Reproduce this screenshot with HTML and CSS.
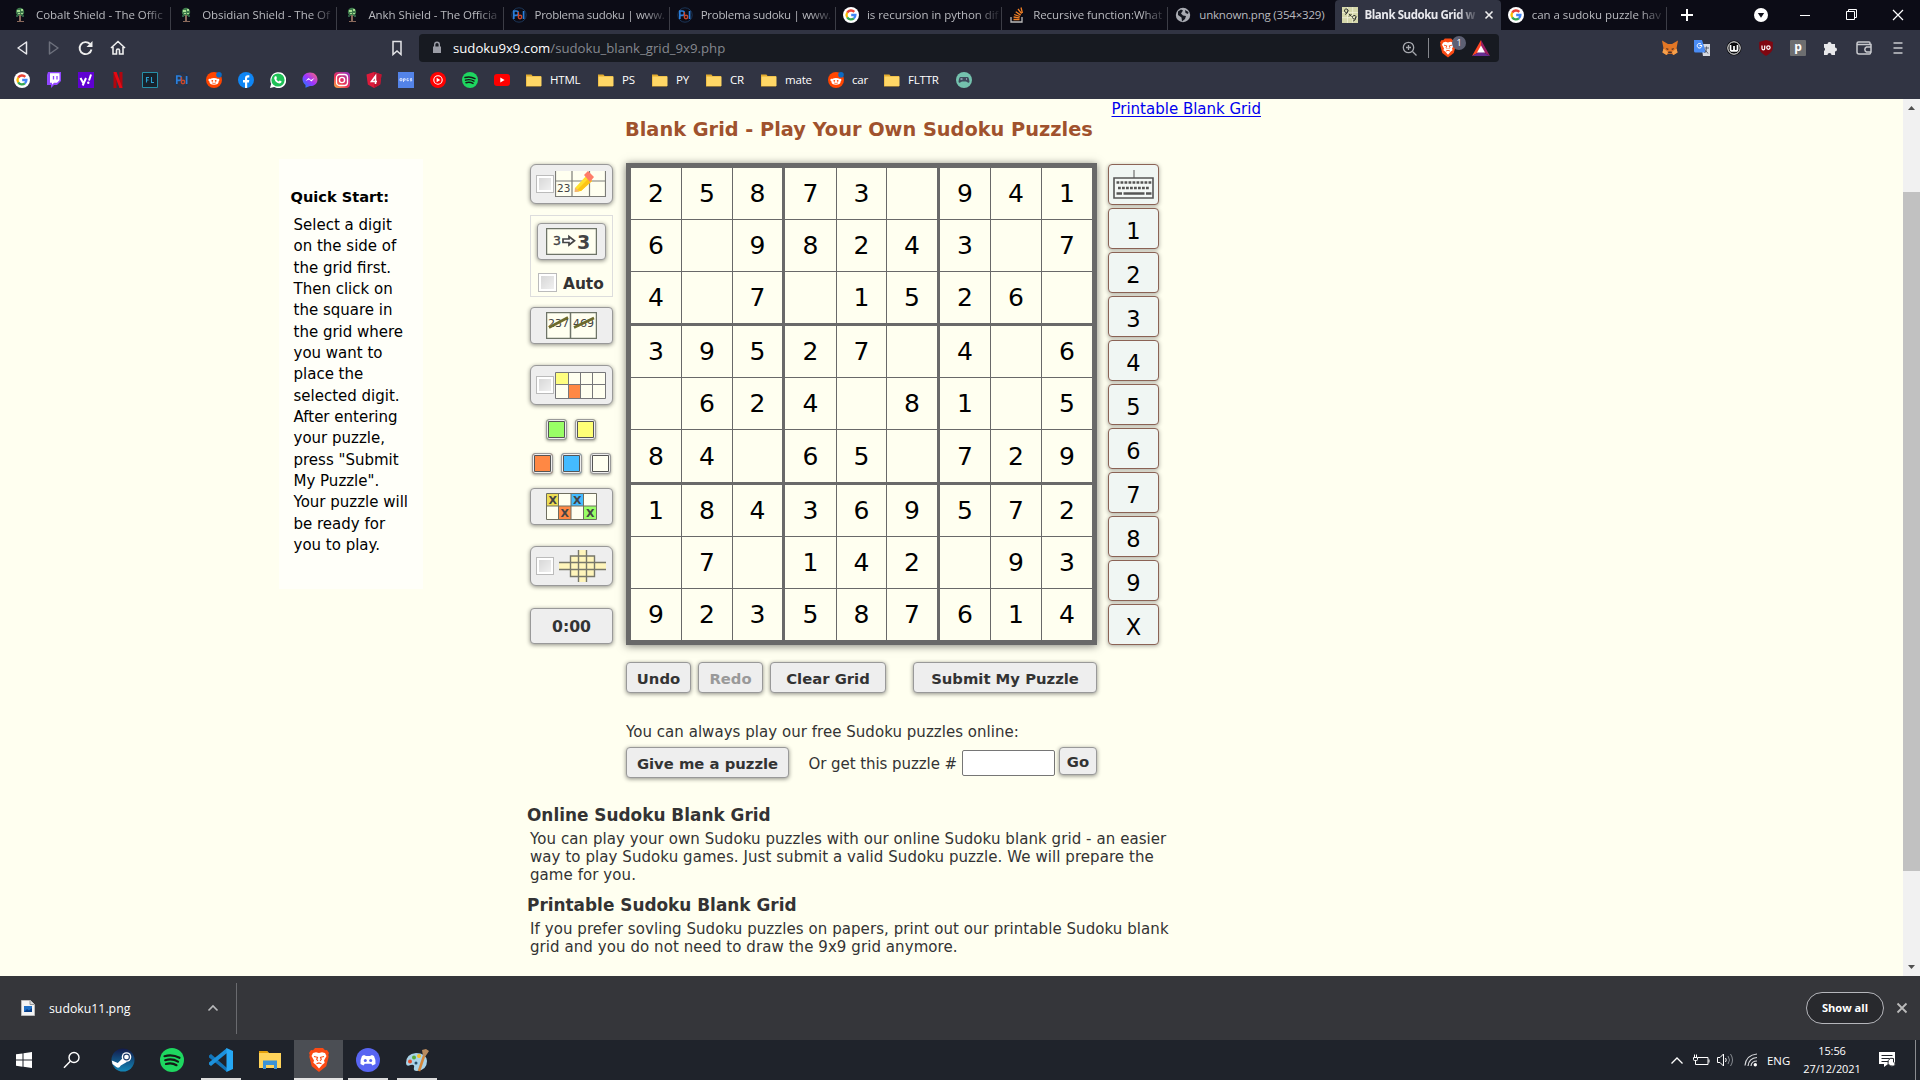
FILE: index.html
```html
<!DOCTYPE html>
<html lang="en">
<head>
<meta charset="utf-8">
<title>Blank Sudoku Grid</title>
<link rel="stylesheet" href="styles.css">
</head>
<body>
<svg class="defs" width="0" height="0">
  <symbol id="google" viewBox="0 0 16 16"><circle cx="8" cy="8" r="8" fill="#fff"/><g fill="none" stroke-width="2.3"><path d="M4.2 5.6A4.5 4.5 0 0 1 11.3 4.9" stroke="#ea4335"/><path d="M4.2 5.6a4.6 4.6 0 0 0 0 4.8" stroke="#fbbc05"/><path d="M4.2 10.4a4.5 4.5 0 0 0 6.7.9" stroke="#34a853"/><path d="M8.2 8h4.2a4.5 4.5 0 0 1-1.5 3.3" stroke="#4285f4"/></g></symbol>
  <symbol id="tree" viewBox="0 0 16 16"><circle cx="8" cy="5" r="4.2" fill="#3f7a4c"/><path d="M5 3h3v2H5zM9 2h2v2H9zM9 6h2v1H9zM6 6h2v1H6z" fill="#a6dd92"/><path d="M7 8h2v6H7zM5 14h7v1H5z" fill="#8a6a5c"/><path d="M4 8h2v2H4zM10 8h2v2h-2z" fill="#2d5c44"/></symbol>
  <symbol id="pbi" viewBox="0 0 16 16"><circle cx="8" cy="8" r="7.2" fill="none" stroke="#1b3556"/><path d="M2.8 12V4h2.4a2 2 0 0 1 0 4.3H3.6M12.6 4v8" fill="none" stroke="#2a7fdc" stroke-width="1.7"/><circle cx="9" cy="10" r="1.7" fill="none" stroke="#c9472c" stroke-width="1.4"/><path d="M7.4 5v5" stroke="#c9472c" stroke-width="1.2"/></symbol>
  <symbol id="reddit" viewBox="0 0 16 16"><circle cx="8" cy="8" r="8" fill="#ff4500"/><ellipse cx="8" cy="9.4" rx="4.6" ry="3.3" fill="#fff"/><circle cx="3.6" cy="8" r="1.2" fill="#fff"/><circle cx="12.2" cy="8" r="1.2" fill="#fff"/><circle cx="6.3" cy="8.8" r=".9" fill="#ff4500"/><circle cx="9.7" cy="8.8" r=".9" fill="#ff4500"/><path d="M6 10.9q2 1.2 4 0M8 6l.6-2.4" fill="none" stroke="#ff4500" stroke-width=".7"/><circle cx="13" cy="2.8" r="2.8" fill="#0b6bc4"/></symbol>
  <symbol id="folder" viewBox="0 0 16 16"><path d="M0 2.500h5.400L6.600 4H15v10.500H0z" fill="#e3ab2e"/><path d="M.5 4.500h15V14H.5z" fill="#ffd766"/></symbol>
  <symbol id="spotify" viewBox="0 0 24 24"><circle cx="12" cy="12" r="12" fill="#1ed760"/><path d="M4.500 8.200q8-2.200 15 1.600M5.200 12.200q7-2 12.800 1.400M6 16q6-1.500 10.500 1.200" fill="none" stroke="#141a16" stroke-width="2.200" stroke-linecap="round"/></symbol>
  <symbol id="brave" viewBox="0 0 20 24"><path d="M6 0h8l2 2.300 2-.3 2 3-.7 1.800.4 2-2.500 9.400L10 24l-7.200-5.800L.3 8.800l.4-2L0 5l2-3 2 .3z" fill="#fb4a14"/><path d="M4 5l3-.7 3 .8 3-.8 3 .7 1.500 3-2.500 4.500.7 2.200-2.200 1.800L10 20.500 6.500 16.500l-2.200-1.800.7-2.200L2.500 8z" fill="#fff"/><path d="M5 8.500l3.500.8-.8 2.200 1.300 1.500M15 8.500l-3.500.8.8 2.200L11 13M7.500 15.800l2.500-.9 2.500.9" fill="none" stroke="#fb4a14" stroke-width="1.100"/></symbol>
</svg>

<header class="browser">
  <div class="tabs">
    <div class="tab"><svg class="i16"><use href="#tree"/></svg><span>Cobalt Shield - The Offic</span></div>
    <div class="tab"><svg class="i16"><use href="#tree"/></svg><span>Obsidian Shield - The Of</span></div>
    <div class="tab"><svg class="i16"><use href="#tree"/></svg><span>Ankh Shield - The Officia</span></div>
    <div class="tab"><svg class="i16"><use href="#pbi"/></svg><span class="tight">Problema sudoku | www.</span></div>
    <div class="tab"><svg class="i16"><use href="#pbi"/></svg><span class="tight">Problema sudoku | www.</span></div>
    <div class="tab"><svg class="i16"><use href="#google"/></svg><span>is recursion in python dif</span></div>
    <div class="tab"><svg class="i16" viewBox="0 0 16 16"><path d="M2 10v5h11v-5" fill="none" stroke="#bcbbbb" stroke-width="1.300"/><path d="M4.500 12.500h6M4.600 10l6 .8M5.200 7.500l5.600 2M6.700 4.700l5 3.400M9 2l3.600 4.700M12 .5l1.400 5.500" stroke="#f48024" stroke-width="1.300"/></svg><span>Recursive function:What</span></div>
    <div class="tab plain"><svg class="i16" viewBox="0 0 16 16"><circle cx="8" cy="8" r="7.200" fill="#a9abb2"/><path d="M3 4.500l3-2 2 1-2 3 2 2 3 .5-1 3-3 2.500-.5-4L3 8zM10 3l3.500 2-.5 2-2.500-1z" fill="#14161f"/></svg><span>unknown.png (354×329)</span></div>
    <div class="tab active"><svg class="i16" viewBox="0 0 16 16"><path d="M0 0h16v16H0z" fill="#d6d8ac"/><path d="M5.500 0v16M10.700 0v16M0 5.500h16M0 10.700h16" stroke="#f4f4dc" stroke-width=".7"/><path d="M6 3.200a1.800 1.800 0 1 0-1.500 2.300Q6 5.200 6 3.200 5.700 7 3 7.500M14 9.700a1.800 1.800 0 1 0-1.500 2.300q1.500-.3 1.500-2.300-.2 4-3 4.500M7 7l2.500 2.500M9.500 7L7 9.500" fill="none" stroke="#363a34"/></svg><span>Blank Sudoku Grid w</span><svg class="tab-x" viewBox="0 0 10 10"><path d="M1.500 1.500l7 7m0-7l-7 7" stroke="#eee" stroke-width="1.600"/></svg></div>
    <div class="tab"><svg class="i16"><use href="#google"/></svg><span>can a sudoku puzzle hav</span></div>
    <div class="window">
      <svg width="14" height="14"><path d="M7 1v12M1 7h12" stroke="#fff" stroke-width="2"/></svg>
      <svg width="14" height="14"><circle cx="7" cy="7" r="7" fill="#fff"/><path d="M3.800 5h6.400L7 9.800z" fill="#10111c"/></svg>
      <svg width="11" height="12"><path d="M0 6.500h10" stroke="#fff"/></svg>
      <svg width="12" height="12"><path d="M.5 2.500h8v8h-8zM2.500 2V.5h8v8H9" fill="none" stroke="#fff"/></svg>
      <svg width="12" height="12"><path d="M1 1l10 10m0-10L1 11" stroke="#fff" stroke-width="1.200"/></svg>
    </div>
  </div>
  <div class="toolbar">
    <div class="nav">
      <svg class="i16" viewBox="0 0 16 16"><path d="M12.500 2v12L4 8z" fill="none" stroke="#e8e8ec" stroke-width="1.500" stroke-linejoin="round"/></svg>
      <svg class="i16" viewBox="0 0 16 16"><path d="M3.500 2v12L12 8z" fill="none" stroke="#6d707c" stroke-width="1.500" stroke-linejoin="round"/></svg>
      <svg class="i16" viewBox="0 0 16 16"><path d="M13.500 9.500A6 6 0 1 1 12 4" fill="none" stroke="#eee" stroke-width="1.900"/><path d="M14.500 1v6h-6z" fill="#eee"/></svg>
      <svg class="i16" viewBox="0 0 16 16"><path d="M1 8l7-6.500L15 8M3 7v7h3.500v-3.500a1.500 1.500 0 0 1 3 0V14H13V7" fill="none" stroke="#eee" stroke-width="1.600"/></svg>
    </div>
    <svg class="i16 bookmark" viewBox="0 0 16 16"><path d="M4 1.500h8v13L8 11l-4 3.500z" fill="none" stroke="#e4e4e8" stroke-width="1.500"/></svg>
    <div class="url">
      <svg width="10" height="14"><path d="M1 5.500h8V12H1z" fill="#9a9ca5"/><path d="M2.700 6V3.500a2.300 2.300 0 0 1 4.600 0V6" fill="none" stroke="#9a9ca5" stroke-width="1.400"/></svg>
      <span class="address"><b>sudoku9x9.com</b>/sudoku_blank_grid_9x9.php</span>
      <svg class="mag" width="15" height="15"><circle cx="6.500" cy="6.500" r="5.200" fill="none" stroke="#a6a8ae" stroke-width="1.300"/><path d="M10.500 10.500l4 4M4 6.500h5M6.500 4v5" stroke="#a6a8ae" stroke-width="1.300"/></svg>
      <i class="rule"></i>
      <span class="shield"><svg width="16" height="20"><use href="#brave"/></svg><em>1</em></span>
      <svg class="bat" width="18" height="16"><path d="M9 0L0 16l9-5z" fill="#ff4724"/><path d="M9 0l9 16-9-5z" fill="#9e1f63"/><path d="M0 16h18l-9-5z" fill="#662d91"/><path d="M9 5.500l4 7H5z" fill="#fff"/></svg>
    </div>
    <div class="extensions">
      <svg class="i16" viewBox="0 0 16 16"><path d="M0 .5l6 3.500h4l6-3.500-1.500 8 1 4-4 2.500-2-1.200h-3L4.500 15l-4-2.500 1-4z" fill="#e27625"/><path d="M4 8l3 1-2 1zM12 8L9 9l2 1zM6 13h4l-.5-1.500h-3z" fill="#4b2e24"/><path d="M1.500 8.500L6 12l-1.500 3-4-2.500zM14.500 8.500L10 12l1.500 3 4-2.500z" fill="#f5a04c"/></svg>
      <svg class="i16" viewBox="0 0 16 16"><path d="M7 4h9v12H9z" fill="#d5d8df"/><path d="M0 0h8l4 12.500H1.500A1.500 1.500 0 0 1 0 11z" fill="#4a8cf5"/><path d="M8 5.500H5.500M7.800 5.700a2.300 2.300 0 1 1-.7-1.600" fill="none" stroke="#fff"/><path d="M10.500 8h4.500M12.500 6.500V8q0 3-2 5M11 9.500l3 4" fill="none" stroke="#5c6270"/></svg>
      <svg class="i16" viewBox="0 0 16 16"><circle cx="8" cy="8" r="7.500" fill="#0b0b0d"/><circle cx="8" cy="8" r="6.200" fill="none" stroke="#fff"/><path d="M4.500 5v4.200a1.700 1.700 0 0 0 3.500 0V6v3.200a1.700 1.700 0 0 0 3.500 0V5" fill="none" stroke="#fff" stroke-width="1.700"/></svg>
      <svg class="i16" viewBox="0 0 16 16"><path d="M8 0l6.800 2v6q0 4-6.800 8Q1.200 12 1.200 8V2z" fill="#800610"/><path d="M4 5.500v3a1 1 0 0 0 2.700 0v-3" fill="none" stroke="#fff" stroke-width="1.200"/><circle cx="10.400" cy="7.600" r="1.700" fill="none" stroke="#fff" stroke-width="1.200"/></svg>
      <span class="pbadge">p</span>
      <svg class="i16" viewBox="0 0 16 16"><path d="M2 4h3.500a2 2 0 1 1 4 0H13v3.500a2 2 0 1 1 0 4V15H9.500a2 2 0 0 0-4 0H2v-4a2 2 0 0 0 0-3.500z" fill="#e7e7ea"/></svg>
      <svg class="i16 wide" viewBox="0 0 16 16"><path d="M14 4.500V3q0-1-1-1H2.500A1.500 1.500 0 0 0 1 3.500V12q0 2 2 2h10.500q1 0 1-1v-1.500M1.500 4.500H15v7.500h-4.500a2.700 2.700 0 0 1 0-5H15" fill="none" stroke="#c8c9ce" stroke-width="1.500"/></svg>
      <svg class="i16 wide" viewBox="0 0 16 16"><path d="M3.500 3h9M3.500 8h9M3.500 13h9" stroke="#c8c9ce" stroke-width="1.500"/></svg>
    </div>
  </div>
  <nav class="bookmarks">
    <svg class="i16"><use href="#google"/></svg>
    <svg class="i16" viewBox="0 0 16 16"><path d="M2 0h13v9l-4 4H8l-3 3v-3H1V3z" fill="#9146ff"/><path d="M4 1.200h9.500v7l-2.500 2.500H8L6 12.700v-2H4z" fill="#fff"/><path d="M7.500 4v3.500M11 4v3.500" stroke="#9146ff" stroke-width="1.300"/></svg>
    <svg class="i16" viewBox="0 0 16 16"><path d="M0 0h16v16H0z" fill="#6001d2"/><path d="M2.500 6l2.700 5M8 6l-3.300 7.500M13 2.500l-2 6" stroke="#fff" stroke-width="2"/><circle cx="10.300" cy="10.800" r="1.200" fill="#fff"/></svg>
    <svg class="i16" viewBox="0 0 16 16"><path d="M3.500 0h3v16h-3zM9.500 0h3v16h-3z" fill="#b1060f"/><path d="M3.500 0h3l6 16h-3z" fill="#e50914"/></svg>
    <svg class="i16" viewBox="0 0 16 16"><path d="M.5.500h15v15H.5z" fill="#17222c" stroke="#2790a8"/><path d="M7 5.500H4.500v5M4.500 8h2M9.500 5v5.500H12" fill="none" stroke="#2b9fd0" stroke-width="1.100"/></svg>
    <svg class="i16"><use href="#pbi"/></svg>
    <svg class="i16"><use href="#reddit"/></svg>
    <svg class="i16" viewBox="0 0 16 16"><circle cx="8" cy="8" r="8" fill="#0f86f5"/><path d="M7 16v-5.500H5V8h2V6.300q0-3 3-3h1.300v2.200H10q-.9 0-.9 1V8h2.200l-.4 2.500H9.200V16z" fill="#fff"/></svg>
    <svg class="i16" viewBox="0 0 16 16"><path d="M0 16l1.200-4.200A8 8 0 1 1 4.200 15z" fill="#fff"/><circle cx="8" cy="8" r="6.600" fill="#1fc157"/><path d="M5 4.300l1.300-.1.700 2-.8.900q.8 1.600 2.500 2.300l1-1 1.900.9q.1 2-2 2.200Q5.500 11 4.200 6.500q0-1.300.8-2.200z" fill="#fff"/></svg>
    <svg class="i16" viewBox="0 0 16 16"><defs><linearGradient id="msg" x1="0" y1="1" x2="1" y2="0"><stop stop-color="#0a84ff"/><stop offset=".5" stop-color="#a033ff"/><stop offset="1" stop-color="#ff6b70"/></linearGradient></defs><path d="M8 .5c10 0 10 14 0 13.500L3.500 15.700V13C-2 8.500.5.500 8 .5z" fill="url(#msg)"/><path d="M3.500 9l3-3 2.500 2 3.500-2-3 3.500L7 7.500z" fill="#fff"/></svg>
    <svg class="i16" viewBox="0 0 16 16"><defs><linearGradient id="ig" x1="0" y1="1" x2=".8" y2="0"><stop stop-color="#fdb845"/><stop offset=".45" stop-color="#ec2f53"/><stop offset="1" stop-color="#9b36b7"/></linearGradient></defs><rect width="16" height="16" rx="4" fill="url(#ig)"/><rect x="2.500" y="2.500" width="11" height="11" rx="3" fill="none" stroke="#fff" stroke-width="1.300"/><circle cx="8" cy="8" r="2.600" fill="none" stroke="#fff" stroke-width="1.400"/></svg>
    <svg class="i16" viewBox="0 0 16 16"><path d="M8 0l7.500 2.600-1.300 10L8 16l-6.200-3.400L.5 2.600z" fill="#dd1b3b"/><path d="M8 0l7.500 2.600-1.300 10L8 16z" fill="#bd1530"/><path d="M9.500 12V4L5.500 9.500H11" fill="none" stroke="#fff" stroke-width="1.600"/></svg>
    <svg class="i16" viewBox="0 0 16 16"><path d="M0 0h16v16H0z" fill="#5383e8"/><path d="M2 6.700h2v2H2zM5.500 10V6.700h1.700v1.500H5.500M10.500 6.700H9v2h1.500v-.8M14 6.700h-1.700v1h1.400v1.100H12" fill="none" stroke="#dfe8ff" stroke-width=".9"/></svg>
    <svg class="i16" viewBox="0 0 16 16"><circle cx="8" cy="8" r="8" fill="#f00"/><circle cx="8" cy="8" r="4.200" fill="none" stroke="#fff" stroke-width="1.100"/><path d="M6.600 5.800v4.400L10.300 8z" fill="#fff"/></svg>
    <svg class="i16"><use href="#spotify"/></svg>
    <svg class="i16" viewBox="0 0 16 16"><rect y="2" width="16" height="12" rx="3" fill="#f00"/><path d="M6.300 5.500v5L10.600 8z" fill="#fff"/></svg>
    <div class="bm w31"><svg class="i16"><use href="#folder"/></svg><span>HTML</span></div>
    <div class="bm w14"><svg class="i16"><use href="#folder"/></svg><span>PS</span></div>
    <div class="bm w14"><svg class="i16"><use href="#folder"/></svg><span>PY</span></div>
    <div class="bm w15"><svg class="i16"><use href="#folder"/></svg><span>CR</span></div>
    <div class="bm w27"><svg class="i16"><use href="#folder"/></svg><span>mate</span></div>
    <div class="bm w16"><svg class="i16"><use href="#reddit"/></svg><span>car</span></div>
    <div class="bm w31"><svg class="i16"><use href="#folder"/></svg><span>FLTTR</span></div>
    <svg class="i16" viewBox="0 0 16 16"><circle cx="8" cy="8" r="8" fill="#74c2ae"/><path d="M4.500 5h7q1.500 0 2 5-.7 1.500-2 .3L10 9.500H6l-1.500.8q-1.300 1.200-2-.3.500-5 2-5z" fill="#3e4b5c"/><path d="M4.500 7h2M10 7h1" stroke="#cde"/></svg>
  </nav>
</header>

<main class="page">
  <aside class="quick">
    <h3>Quick Start:</h3>
    <p>Select a digit<br>on the side of<br>the grid first.<br>Then click on<br>the square in<br>the grid where<br>you want to<br>place the<br>selected digit.<br>After entering<br>your puzzle,<br>press "Submit<br>My Puzzle".<br>Your puzzle will<br>be ready for<br>you to play.</p>
  </aside>

  <div class="content">
    <div class="head"><h1>Blank Grid - Play Your Own Sudoku Puzzles</h1><a href="#">Printable Blank Grid</a></div>
    <div class="game">
      <div class="tools">
        <div class="tool check"><i class="box"></i>
          <svg width="51" height="26"><path d="M0 0h51v26H0z" fill="#fffff0"/><path d="M.5 0v25.500h50V0M17 0v26M34.500 0v26M0 10h51" fill="none" stroke="#7c7c78" stroke-width="1.200"/><text x="2" y="21" font-size="10.500" class="pen">23</text><path d="M20 17L31 5l6 5-11 10-6 1z" fill="#ffe02e"/><path d="M22 19L34 7l3 3-11 10z" fill="#fdc414"/><path d="M29 4l4-4 6 6-4 5z" fill="#ff7d68"/><path d="M20 16.500l-.5 4.500 5-.5z" fill="#f4b273"/></svg></div>
        <div class="auto"><div class="tool small">
          <svg width="51" height="27"><path d="M.5.500h50v26H.5z" fill="#fffff0" stroke="#6e7468" stroke-width="1.500"/><text x="7" y="17" font-size="12.500" class="pen heavy">3</text><text x="31" y="20.500" font-size="19" class="pen bold">3</text><path d="M17 11h6V8.500l5.500 4.300-5.500 4.200v-2.500h-6z" fill="#fff" stroke="#444" stroke-width="1.700"/></svg></div>
          <label><i class="box"></i><span>Auto</span></label></div>
        <div class="tool strike">
          <svg width="51" height="27"><path d="M.5.500h50v26H.5zM24.500 0v27" fill="#fffff0" stroke="#6e7468" stroke-width="1.500"/><text x="2" y="15" font-size="11" class="pen">237</text><text x="27" y="15" font-size="11" class="pen">469</text><path d="M3 15.500l19-10M28 15.500l20-9.500" stroke="#6d6a2c" stroke-width="2.600"/></svg></div>
        <div class="tool check paint"><i class="box"></i>
          <svg width="51" height="27"><path d="M.5.500h50v26H.5z" fill="#fffff0"/><path d="M1 1h12v12H1z" fill="#ffff80"/><path d="M13 13h12v13H13z" fill="#ff8844"/><path d="M.5.500h50v26H.5zM13.500 0v27M25.500 0v27M37.500 0v27M0 12.500h51" fill="none" stroke="#77777a"/></svg></div>
        <div class="chips one"><i class="green"></i><i class="yellow"></i></div>
        <div class="chips two"><i class="orange"></i><i class="blue"></i><i class="white"></i></div>
        <div class="tool strike marks">
          <svg width="51" height="27"><path d="M.5.500h50v26H.5z" fill="#fffff0"/><path d="M1 1h12v12H1z" fill="#eedd55"/><path d="M13 13h12v13H13z" fill="#ff8844"/><path d="M25 1h12v12H25z" fill="#44bbff"/><path d="M38 13h12v13H38z" fill="#99ff66"/><path d="M.5.500h50v26H.5zM12.500 0v27M25 0v27M37.500 0v27M0 13h51" fill="none" stroke="#6e6e60"/><g class="pen bold" font-size="11"><text x="2.500" y="11">X</text><text x="27" y="11">X</text><text x="14.500" y="24">X</text><text x="40" y="24">X</text></g></svg></div>
        <div class="tool check cross"><i class="box"></i>
          <svg width="47" height="32"><path d="M0 12h47v8H0zM19 0h9v32h-9zM11 6h25v20H11z" fill="#fff5bb"/><path d="M0 12.500h47M0 19.500h47M19.500 0v32M27.500 0v32M11.500 6h24v20.500h-24z" fill="none" stroke="#77776a" stroke-width="1.400"/></svg></div>
        <div class="tool time">0:00</div>
      </div>

      <div class="grid">
        <b>2</b><b>5</b><b>8</b><b>7</b><b>3</b><b></b><b>9</b><b>4</b><b>1</b>
        <b>6</b><b></b><b>9</b><b>8</b><b>2</b><b>4</b><b>3</b><b></b><b>7</b>
        <b>4</b><b></b><b>7</b><b></b><b>1</b><b>5</b><b>2</b><b>6</b><b></b>
        <b>3</b><b>9</b><b>5</b><b>2</b><b>7</b><b></b><b>4</b><b></b><b>6</b>
        <b></b><b>6</b><b>2</b><b>4</b><b></b><b>8</b><b>1</b><b></b><b>5</b>
        <b>8</b><b>4</b><b></b><b>6</b><b>5</b><b></b><b>7</b><b>2</b><b>9</b>
        <b>1</b><b>8</b><b>4</b><b>3</b><b>6</b><b>9</b><b>5</b><b>7</b><b>2</b>
        <b></b><b>7</b><b></b><b>1</b><b>4</b><b>2</b><b></b><b>9</b><b>3</b>
        <b>9</b><b>2</b><b>3</b><b>5</b><b>8</b><b>7</b><b>6</b><b>1</b><b>4</b>
      </div>

      <div class="keys">
        <div><svg width="41" height="30"><path d="M21 0v8" stroke="#555"/><path d="M1 8h39v20H1z" fill="#f4f8f6" stroke="#555" stroke-width="1.600"/><path d="M3.500 12.500h35" stroke="#555" stroke-width="2.600" stroke-dasharray="2.800 1.200"/><path d="M5 18h32" stroke="#555" stroke-width="2.600" stroke-dasharray="2.800 1.200"/><path d="M3.500 23.500h5.500M10.500 23.500h21M33 23.500h5.500" stroke="#555" stroke-width="2.600"/></svg></div>
        <div>1</div><div>2</div><div>3</div><div>4</div><div>5</div><div>6</div><div>7</div><div>8</div><div>9</div><div>X</div>
      </div>
    </div>

    <div class="actions"><button class="w65">Undo</button><button class="w65 off">Redo</button><button class="w116">Clear Grid</button><button class="w184">Submit My Puzzle</button></div>
    <p class="always">You can always play our free Sudoku puzzles online:</p>
    <div class="fetch"><button class="w163">Give me a puzzle</button><span>Or get this puzzle #</span><input type="text"><button class="go">Go</button></div>

    <h2>Online Sudoku Blank Grid</h2>
    <p class="para">You can play your own Sudoku puzzles with our online Sudoku blank grid - an easier<br>way to play Sudoku games. Just submit a valid Sudoku puzzle. We will prepare the<br>game for you.</p>
    <h2 class="second">Printable Sudoku Blank Grid</h2>
    <p class="para">If you prefer sovling Sudoku puzzles on papers, print out our printable Sudoku blank<br>grid and you do not need to draw the 9x9 grid anymore.</p>
  </div>

  <div class="scroll">
    <svg width="17" height="17"><path d="M5 11h7L8.500 7z" fill="#505050"/></svg>
    <i></i>
    <svg width="17" height="17"><path d="M5 6h7l-3.500 4z" fill="#505050"/></svg>
  </div>
</main>

<section class="downloads">
  <div class="file">
    <svg width="14" height="16"><path d="M.5.500h9l4 4v11H.5z" fill="#f4f4f4" stroke="#b9b9b9"/><path d="M9 .5v4h4.500" fill="#ddd" stroke="#999"/><path d="M3 6h8v6H3z" fill="#1f6fc5"/><path d="M3 12l3-3 2 1.500L11 8v4z" fill="#0b3f86"/></svg>
    <span>sudoku11.png</span>
    <svg width="12" height="8"><path d="M1.500 6.500L6 2l4.500 4.500" fill="none" stroke="#b9babc" stroke-width="1.600"/></svg>
  </div>
  <span class="showall">Show all</span>
  <svg width="12" height="12"><path d="M1.500 1.500l9 9m0-9l-9 9" stroke="#bbb" stroke-width="1.800"/></svg>
</section>

<footer class="taskbar">
  <div class="app"><svg width="16" height="16"><path d="M0 2.300L6.500 1.400v6.200H0zM7.500 1.200L16 0v7.600H7.500zM0 8.500h6.500v6.200L0 13.800zM7.500 8.500H16V16l-8.500-1.200z" fill="#fff"/></svg></div>
  <div class="app search"><svg width="18" height="18"><circle cx="11" cy="6.500" r="5" fill="none" stroke="#fff" stroke-width="1.400"/><path d="M7.300 10.300L1 16.700" stroke="#fff" stroke-width="1.500"/></svg></div>
  <div class="app"><svg width="24" height="24"><defs><linearGradient id="steam" x2="0" y2="1"><stop stop-color="#131a4a"/><stop offset="1" stop-color="#1387b8"/></linearGradient></defs><circle cx="12" cy="12" r="11.500" fill="url(#steam)"/><path d="M.8 12.500l6 2.500 5-5 4 4-6 3.500q-2 3.500-4.500 1.500L1.500 16z" fill="#fff"/><circle cx="15.500" cy="9" r="4.800" fill="#fff"/><circle cx="15.500" cy="9" r="2.900" fill="#fff" stroke="#1c3a6a" stroke-width="1.100"/></svg></div>
  <div class="app"><svg width="24" height="24"><use href="#spotify"/></svg></div>
  <div class="app open"><svg width="24" height="24"><path d="M0 7.500L2 6l16 14V24L0 9.500z" fill="#1274b8"/><path d="M0 16.500L2 18 18 5V0L0 14.500z" fill="#1c91dc"/><path d="M17.500 0L24 3v18l-6.500 3z" fill="#26a8f5"/></svg></div>
  <div class="app"><svg width="22" height="20"><path d="M0 1h8l2 2h12v15H0z" fill="#ffd35a"/><path d="M0 1h8l1.500 2H0z" fill="#e5a10b"/><path d="M4 10.500h14V19h-3v-4H7v4H4z" fill="#3b93d6"/></svg></div>
  <div class="app open current"><svg width="20" height="24"><use href="#brave"/></svg></div>
  <div class="app open"><svg width="24" height="24"><circle cx="12" cy="12" r="12" fill="#5865f2"/><path d="M8 7l2 1h4l2-1 2 1q2 4 1.500 8l-3 1.500-1.300-1.800H8.800L7.500 17.500l-3-1.500Q4 12 6 8z" fill="#fff"/><circle cx="9.300" cy="12.600" r="1.500" fill="#5865f2"/><circle cx="14.700" cy="12.600" r="1.500" fill="#5865f2"/></svg></div>
  <div class="app open"><svg width="24" height="24"><path d="M1 15Q1 6 11 5q10 0 11 8 0 9-10 10-4 0-3-3.500T5.500 17Q1 19 1 15z" fill="#a9d3e8"/><circle cx="5" cy="13.500" r="2" fill="#e5502c"/><circle cx="9" cy="9.500" r="2" fill="#58ac3a"/><circle cx="14" cy="8" r="2" fill="#f5c02c"/><circle cx="11" cy="15" r="1.500" fill="#27506a"/><path d="M14 23l5-15" stroke="#d58638" stroke-width="2.500"/><path d="M17 2l4-1 3 2-4 6-2-1z" fill="#b88b5e"/></svg></div>
  <div class="tray">
    <svg width="14" height="9"><path d="M1.500 7.500L7 2l5.500 5.500" fill="none" stroke="#fff" stroke-width="1.300"/></svg>
    <svg width="17" height="13"><path d="M5 3.500h10v7H5M16 5.500v3M.5 3.500h4v2q0 1-1 1h-2q-1 0-1-1zM1.500 3V.5M3.500 3V.5M2.500 6.500v4h3" fill="none" stroke="#fff"/></svg>
    <svg width="17" height="14"><path d="M.5 4.500H3L6.500 1v12L3 9.500H.5z" fill="none" stroke="#fff"/><path d="M8.500 5q1.500 2 0 4" fill="none" stroke="#fff"/><path d="M11 3q3 4 0 8M13.500 1q4 6 0 12" fill="none" stroke="#888c92"/></svg>
    <svg width="14" height="14"><path d="M1 12.500Q2 2 13 1M4 13Q5 5 13 4.500M7 13q.5-5 6-5" fill="none" stroke="#d9dadd" stroke-width="1.200"/><circle cx="11.300" cy="11.700" r="1.700" fill="#fff"/></svg>
    <span class="lang">ENG</span>
    <span class="clock">15:56<br>27/12/2021</span>
    <svg width="17" height="16"><path d="M0 0h16v12H9l-4 3v-3H0z" fill="#fff"/><path d="M2.500 3.500h11M2.500 6.500h11M2.500 9.500h7" stroke="#20242b" stroke-width="1.200"/><path d="M14.500 6.500a4 4 0 1 0 2 5.500q-3-1-2-5.500z" fill="#fff" stroke="#20242b"/></svg>
  </div>
</footer>
</body>
</html>
```
FILE: styles.css
```css
* { box-sizing: border-box; }
body {
  margin: 0; width: 1920px; height: 1080px; overflow: hidden;
  display: flex; flex-direction: column;
  font-family: "DejaVu Sans", Verdana, sans-serif; font-size: 15px; color: #333;
  background: #fffff0;
}
svg { display: block; flex: none; }
h1, h2, h3, p { margin: 0; }
.defs { position: absolute; }
.i16 { width: 16px; height: 16px; flex: none; }

.browser { height: 99px; flex: none; background: #313443; font-family: "Open Sans", "Segoe UI", sans-serif; font-size: 11.5px; letter-spacing: -.2px; color: #fff; }

/* Tab strip */
.tabs { display: flex; height: 30px; padding-left: 5px; background: #0c0c16; }
.tab { width: 166.200px; flex: none; display: flex; align-items: center; gap: 8px; padding: 0 3px 0 7px; color: #b9babf; position: relative; letter-spacing: -.05px; }
.tab span { flex: 1; padding-bottom: 2px; white-space: nowrap; -webkit-mask-image: linear-gradient(90deg, #000 82%, rgba(0,0,0,.1)); mask-image: linear-gradient(90deg, #000 82%, rgba(0,0,0,.1)); }
.tab .tight { letter-spacing: -.3px; }
.tab.plain span { -webkit-mask-image: none; mask-image: none; letter-spacing: -.2px; }
.tab::after { content: ""; position: absolute; right: 0; top: 7px; bottom: 0; width: 1px; background: #3c3d46; }
.tab.plain::after, .tab.active::after { display: none; }
.tab.active { background: #313443; border-radius: 4px 4px 0 0; color: #e9e9ee; font-weight: 700; letter-spacing: -.45px; padding-right: 7px; gap: 7px; }
.tab-x { width: 10px; height: 10px; }
.window { flex: 1; display: flex; align-items: center; padding-bottom: 1px; }
.window svg:nth-child(1) { margin-left: 13px; }
.window svg:nth-child(2) { margin-left: 60px; }
.window svg:nth-child(3) { margin-left: 32px; }
.window svg:nth-child(4) { margin-left: 35px; }
.window svg:nth-child(5) { margin-left: 34px; }

/* Toolbar */
.toolbar { height: 36px; display: flex; align-items: center; padding: 0 14px; }
.nav { display: flex; gap: 16px; width: 375px; }
.url { margin-left: 14px; width: 1080px; height: 28px; border-radius: 4px; background: #171a21; display: flex; align-items: center; padding-left: 13px; }
.address { width: 946px; margin-left: 11px; font-size: 13.200px; letter-spacing: 0; color: #85888f; }
.address b { font-weight: 400; color: #fff; }
.mag { margin-left: 3px; }
.rule { width: 1px; height: 20px; margin-left: 11px; background: #85878d; }
.shield { position: relative; margin-left: 11px; }
.shield em { position: absolute; left: 12px; top: -2px; width: 14px; height: 14px; border-radius: 50%; background: #5d6073; font: 9px/13px "Open Sans", sans-serif; text-align: center; color: #fff; }
.bat { margin-left: 16px; }
.extensions { margin-left: auto; display: flex; gap: 16px; }
.wide { margin-left: 2px; }
.pbadge { width: 16px; height: 16px; background: #6d6e70; border-radius: 1px; font: 700 12px/14px "Open Sans", sans-serif; text-align: center; }

/* Bookmarks */
.bookmarks { height: 30px; display: flex; align-items: center; gap: 16px; padding: 0 0 3px 14px; }
.bm { display: flex; align-items: center; gap: 8px; white-space: nowrap; }
.bm span { display: block; }
.w14 span { width: 14px; }
.w15 span { width: 15px; }
.w16 span { width: 16px; }
.w27 span { width: 27px; }
.w31 span { width: 32px; }

/* Page */
.page { height: 877px; flex: none; display: flex; background: #fffff0; }
.quick { width: 144px; height: 430px; margin: 60px 0 0 279px; padding: 28px 0 0 11.500px; background: #fffff9; color: #000; }
.quick h3 { font-size: 14.600px; line-height: 20px; }
.quick p { margin: 8px 0 0 3px; line-height: 21.350px; white-space: nowrap; }
.content { margin-left: 104px; width: 760px; }
.head { height: 64px; display: flex; padding-left: 98px; }
.head h1 { width: 486.500px; flex: none; font-size: 19.330px; line-height: 24px; padding-top: 19px; color: #a0522d; white-space: nowrap; }
.head a { line-height: 20px; color: #00e; text-underline-offset: 2px; text-decoration-thickness: 1px; }
.game { display: flex; align-items: flex-start; padding-left: 3px; }

/* Left tools */
.tools { width: 83px; padding-top: 1px; display: flex; flex-direction: column; }
.tool { display: flex; align-items: center; justify-content: center; height: 37px; background: #eee; border: 1px solid #999; border-radius: 4px; box-shadow: 0 1px 4px rgba(0,0,0,.45); }
.tool.check { height: 40px; border-radius: 6px; justify-content: flex-start; padding-left: 5px; gap: 1px; }
.box { width: 18px; height: 18px; flex: none; border: 1px solid #bbb; background: linear-gradient(135deg, #d4d4d4, #f4f4f4); box-shadow: inset 0 0 0 2px #fff; }
.auto { height: 82px; margin: 11px 0 10px; border: 1px solid #ddd; padding: 7px 6px 0; }
.auto label { display: flex; align-items: center; gap: 6px; margin: 13px 0 0 1px; font-weight: 700; font-size: 15.400px; line-height: 19px; }
.auto label span { padding-top: 4px; }
.auto label .box { width: 19px; height: 19px; }
.auto label { height: 19px; }
.pen { font-family: "DejaVu Sans", sans-serif; fill: #444; }
.heavy { stroke: #444; stroke-width: .4px; }
.bold { font-weight: 700; }
.paint { margin-top: 21px; }
.chips { display: flex; justify-content: center; gap: 8px; }
.chips i { width: 21px; height: 21px; background: #fffff0; border: 1px solid #999; border-radius: 3px; box-shadow: inset 0 0 0 1px #eee, inset 0 0 0 2px #555, 0 1px 3px rgba(0,0,0,.4); }
.chips.one { margin-top: 14px; padding-right: 1px; }
.chips.two { margin-top: 13px; }
.chips .green { background: #99ff66; }
.chips .yellow { background: #ffff77; }
.chips .orange { background: #ff8844; }
.chips .blue { background: #44bbff; }
.marks { margin-top: 14px; }
.cross { margin-top: 21px; }
.tool.cross { gap: 5px; }
.time { height: 36px; margin-top: 22px; font-weight: 700; font-size: 15.700px; }

/* Board */
.grid {
  margin-left: 13px; border: 5px solid #696969; background: #696969; box-shadow: 0 1px 8px rgba(0,0,0,.5);
  display: grid;
  grid-template-columns: 51px 51px 52px 52px 50px 53px 51px 51px 50px;
  grid-template-rows: 52px 52px 54px 52px 52px 55px 52px 52px 51px;
}
.grid b { display: flex; align-items: center; justify-content: center; padding-top: 1px; background: #fffff0; border: solid #696969; border-width: 0 1px 1px 0; font-weight: 400; font-size: 25px; line-height: 28px; color: #000; }
.grid b:nth-child(9n+3), .grid b:nth-child(9n+6) { border-right-width: 3px; }
.grid b:nth-child(9n) { border-right: 0; }
.grid b:nth-child(n+19):nth-child(-n+27), .grid b:nth-child(n+46):nth-child(-n+54) { border-bottom-width: 3px; }
.grid b:nth-child(n+73) { border-bottom: 0; }

/* Digit keys */
.keys { margin-left: 11px; padding-top: 1px; display: flex; flex-direction: column; gap: 3px; }
.keys div { width: 51px; height: 41px; display: flex; align-items: center; justify-content: center; padding-top: 4px; background: #f0f6f3; border: 1px solid #8b6355; border-radius: 4px; box-shadow: 0 1px 4px rgba(0,0,0,.35); font-size: 22.500px; line-height: 26px; color: #000; }
.keys div:first-child { padding: 0; }

/* Buttons */
button { height: 31px; padding: 1px 0 0; border: 1px solid #999; border-radius: 4px; background: #eee; box-shadow: 0 1px 4px rgba(0,0,0,.45); font: 700 14.800px "DejaVu Sans", sans-serif; color: #333; }
.off { color: #999; }
.w65 { width: 65px; }
.w116 { width: 116px; }
.w163 { width: 163px; }
.w184 { width: 184px; margin-left: 20px; }
.actions { display: flex; gap: 7px; padding: 17px 0 0 99px; }
.always { margin: 28.500px 0 0 99px; line-height: 20px; letter-spacing: .04px; }
.fetch { display: flex; align-items: flex-start; height: 31px; margin: 5.500px 0 0 99px; }
.fetch span { margin-left: 19.500px; width: 153.500px; padding-top: 7px; line-height: 20px; letter-spacing: -.06px; }
.fetch input { width: 93px; height: 26px; margin: 3px 4px 0 0; border: 1px solid #767676; border-radius: 2px; background: #fff; }
.go { width: 38px; height: 28px; }
h2 { margin-top: 27px; font-size: 16.900px; line-height: 20px; }
h2.second { margin-top: 11px; }
.para { margin: 5px 0 0 3px; line-height: 18px; letter-spacing: .072px; white-space: nowrap; }

/* Scrollbar */
.scroll { margin-left: auto; width: 17px; background: #f1f1f1; display: flex; flex-direction: column; }
.scroll i { height: 679px; margin: 76px 0 auto; background: #c1c1c1; }

/* Download shelf */
.downloads { height: 64px; flex: none; display: flex; align-items: center; background: #35363a; padding-right: 12px; font-family: "Open Sans", sans-serif; color: #fff; }
.file { width: 237px; height: 51px; display: flex; align-items: center; padding-left: 21px; border-right: 1px solid #6a6b6f; }
.file span { margin-left: 14px; width: 158px; font-size: 12.300px; }
.showall { margin-left: auto; margin-right: 12px; width: 78px; height: 32px; border: 1px solid #b5b6bb; border-radius: 16px; background: #28292d; font-weight: 700; font-size: 11.100px; line-height: 29px; text-align: center; }

/* Taskbar */
.taskbar { height: 40px; flex: none; display: flex; background: #1f232b; font-family: "Open Sans", sans-serif; color: #fff; }
.app { width: 49px; display: flex; align-items: center; justify-content: center; border-bottom: 2px solid transparent; padding-top: 2px; }
.app:first-child { padding-right: 1px; }
.app.search { padding-right: 3px; }
.app.open { background: linear-gradient(#dcdcdc, #dcdcdc) center bottom / 40px 2px no-repeat border-box; }
.app.current { background: #4b4e54; border-bottom-color: #e4e4e4; }
.tray { margin-left: auto; display: flex; align-items: center; padding-right: 4px; border-right: 1px solid #8a8c90; margin-right: 4px; width: 246px; }
.tray svg:nth-child(2) { margin-left: 9px; }
.tray svg:nth-child(3) { margin-left: 7px; }
.tray svg:nth-child(4) { margin-left: 10px; }
.lang { margin-left: 9px; width: 24px; font-size: 11.400px; }
.clock { margin-left: 10px; width: 62px; font-size: 11px; letter-spacing: -.1px; line-height: 18px; text-align: center; }
.tray svg:last-child { margin-left: 16px; }
```
